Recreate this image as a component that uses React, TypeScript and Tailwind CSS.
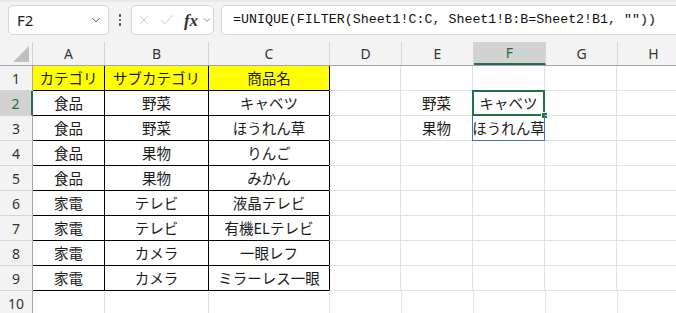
import { ChevronDown, X, Check } from 'lucide-react';

const COLS = ['A', 'B', 'C', 'D', 'E', 'F', 'G', 'H'];
const WIDTHS = [72, 104, 121, 72, 72, 72, 72, 72];

const DATA: string[][] = [
    ['カテゴリ', 'サブカテゴリ', '商品名', '', '', '', '', ''],
    ['食品', '野菜', 'キャベツ', '', '野菜', 'キャベツ', '', ''],
    ['食品', '野菜', 'ほうれん草', '', '果物', 'ほうれん草', '', ''],
    ['食品', '果物', 'りんご', '', '', '', '', ''],
    ['食品', '果物', 'みかん', '', '', '', '', ''],
    ['家電', 'テレビ', '液晶テレビ', '', '', '', '', ''],
    ['家電', 'テレビ', '有機ELテレビ', '', '', '', '', ''],
    ['家電', 'カメラ', '一眼レフ', '', '', '', '', ''],
    ['家電', 'カメラ', 'ミラーレス一眼', '', '', '', '', ''],
    ['', '', '', '', '', '', '', ''],
];

const uiFont = { fontFamily: '"Noto Sans", "Open Sans", sans-serif' };
const cellFont = { fontFamily: '"Noto Sans CJK JP", "Noto Sans", sans-serif' };

export default function App() {
    return (
        <div className="w-[676px] h-[313px] overflow-hidden bg-white">
            {/* Formula bar */}
            <div className="h-[42px] bg-[#f3f3f3] border-t-2 border-[#e9e9e9] flex items-start pt-[3px] pl-[8px] gap-0">
                <div className="w-[101px] h-[30px] bg-white border border-[#d6d6d6] rounded-[5px] flex items-center pl-[8px] pr-[5px]">
                    <span className="text-[15px] text-[#222] flex-1" style={uiFont}>F2</span>
                    <ChevronDown size={14} strokeWidth={1.5} className="text-[#444]" />
                </div>
                <div className="w-[22px] h-[30px] flex flex-col items-center justify-center gap-[2px]">
                    <span className="w-[2.5px] h-[2.5px] bg-[#444] rounded-full" />
                    <span className="w-[2.5px] h-[2.5px] bg-[#444] rounded-full" />
                    <span className="w-[2.5px] h-[2.5px] bg-[#444] rounded-full" />
                </div>
                <div className="w-[83px] h-[30px] bg-white border border-[#d6d6d6] rounded-[5px] flex items-center pl-[4px]">
                    <X size={16} strokeWidth={1} className="text-[#b8b8b8]" />
                    <Check size={18} strokeWidth={1} className="text-[#b8b8b8] ml-[6px]" />
                    <span className="ml-[8px] text-[17px] italic font-bold text-[#333] leading-none" style={{ fontFamily: '"Liberation Serif", serif' }}>fx</span>
                    <ChevronDown size={12} strokeWidth={1.5} className="text-[#666] ml-[3px]" />
                </div>
                <div className="ml-[7px] flex-1 h-[30px] bg-white border border-[#d6d6d6] border-r-0 rounded-l-[5px] flex items-center pl-[11px] whitespace-nowrap">
                    <span className="text-[13.3px] text-[#111]" style={{ fontFamily: '"Liberation Mono", monospace' }}>
                        =UNIQUE(FILTER(Sheet1!C:C, Sheet1!B:B=Sheet2!B1, ""))
                    </span>
                </div>
            </div>

            {/* Column headers */}
            <div className="flex h-[24px] bg-[#f3f3f3] border-b border-[#a6a6a6]">
                <div className="w-[33px] shrink-0 relative border-r border-[#d0d0d0]">
                    <svg className="absolute right-[3px] bottom-[3px]" width="16" height="16" viewBox="0 0 16 16">
                        <polygon points="16,0 16,16 0,16" fill="#bfbfbf" />
                    </svg>
                </div>
                {COLS.map((c, i) => (
                    <div
                        key={c}
                        style={{ width: WIDTHS[i], ...uiFont }}
                        className={`shrink-0 flex items-center justify-center text-[14px] border-r border-[#d4d4d4] ${c === 'F' ? 'bg-[#d2d2d2] text-[#1e6e3f] border-b-2 border-b-[#217346]' : 'text-[#333]'}`}
                    >
                        {c}
                    </div>
                ))}
            </div>

            {/* Rows */}
            {DATA.map((row, r) => {
                const inTable = r < 9;
                return (
                    <div key={r} className="flex h-[25px]">
                        <div
                            style={uiFont}
                            className={`w-[33px] shrink-0 flex items-center justify-center text-[14px] border-b border-[#d4d4d4] ${r === 1 ? 'bg-[#d2d2d2] text-[#1e6e3f] border-r-2 border-r-[#217346]' : 'bg-[#f3f3f3] text-[#333] border-r border-r-[#a6a6a6]'}`}
                        >
                            {r + 1}
                        </div>
                        {row.map((v, i) => {
                            const table = inTable && i < 3;
                            const yellow = r === 0 && i < 3;
                            const edgeAfterTable = inTable && i === 3;
                            return (
                                <div
                                    key={i}
                                    style={{ width: WIDTHS[i], ...cellFont }}
                                    className={`relative shrink-0 flex items-center justify-center whitespace-nowrap text-[14.5px] text-[#1a1a1a] border-r border-b
                                        ${table ? 'border-black' : 'border-[#e1e1e1]'}
                                        ${yellow ? 'bg-[#ffff00]' : ''}
                                        ${edgeAfterTable ? 'border-l border-l-black -ml-px' : ''}
                                        ${r === 9 && i < 3 ? 'border-r-[#e1e1e1]' : ''}`}
                                >
                                    {v}
                                    {r === 1 && i === 5 && (
                                        <div className="absolute -left-px -top-px -right-px -bottom-px border-2 border-[#217346]">
                                            <div className="absolute -right-[5px] -bottom-[5px] w-[7px] h-[7px] bg-[#217346] border border-white" />
                                        </div>
                                    )}
                                    {r === 2 && i === 5 && (
                                        <div className="absolute -left-px top-0 -right-px -bottom-px border border-t-0 border-[#3b6fd0]" />
                                    )}
                                </div>
                            );
                        })}
                    </div>
                );
            })}
        </div>
    );
}
